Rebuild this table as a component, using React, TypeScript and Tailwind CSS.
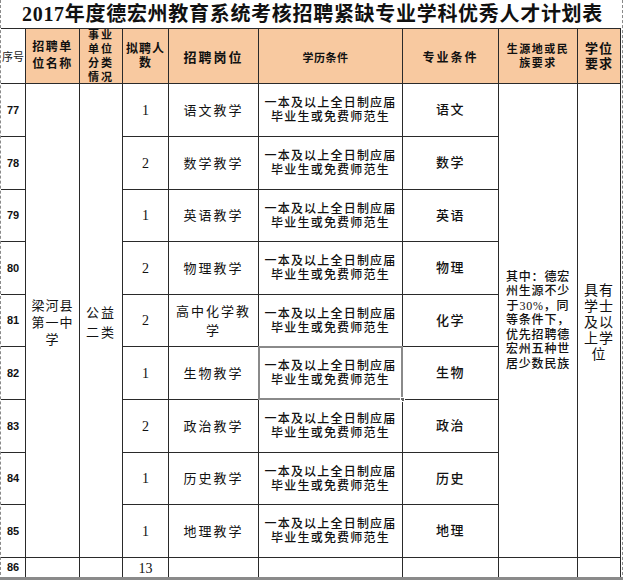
import React from "react";

type Row = { n: number; c: number; p: React.ReactNode; m: string; sel?: boolean };

const rows: Row[] = [
  { n: 77, c: 1, p: "语文教学", m: "语文" },
  { n: 78, c: 2, p: "数学教学", m: "数学" },
  { n: 79, c: 1, p: "英语教学", m: "英语" },
  { n: 80, c: 2, p: "物理教学", m: "物理" },
  { n: 81, c: 2, p: (<>高中化学教<br />学</>), m: "化学" },
  { n: 82, c: 1, p: "生物教学", m: "生物", sel: true },
  { n: 83, c: 2, p: "政治教学", m: "政治" },
  { n: 84, c: 1, p: "历史教学", m: "历史" },
  { n: 85, c: 1, p: "地理教学", m: "地理" },
];

const cell = "bg-white flex items-center justify-center text-center text-[#111]";
const head = "bg-[#f8c9a0] flex items-center justify-center text-center text-[#111] font-semibold";

export default function App() {
  return (
    <div className="relative w-[625px] h-[580px] overflow-hidden bg-white font-['Liberation_Serif','Noto_Sans_CJK_SC',serif]">
      <div className="h-[28px] flex items-center justify-center text-[20px] font-bold tracking-[0.7px] text-[#111] leading-none">
        2017年度德宏州教育系统考核招聘紧缺专业学科优秀人才计划表
      </div>
      <div className="ml-px w-[620px] bg-[#2a2a2a] pt-px pr-px">
        <div className="grid grid-cols-[24px_53px_42px_45px_89px_143px_95px_78px_42px] grid-rows-[54px_52px_52px_51px_52px_51px_52px_52px_51px_52px_19px] gap-px">
          {/* header */}
          <div className="bg-white flex items-center justify-start text-[11px] text-[#222] font-['Noto_Sans_CJK_SC',sans-serif] leading-none pl-[1px]">序号</div>
          <div className={`${head} text-[12px] leading-[17px] tracking-[1.5px]`}>招聘单<br />位名称</div>
          <div className={`${head} text-[11px] leading-[14px] tracking-[2px] overflow-hidden`}>事业<br />单位<br />分类<br />情况</div>
          <div className={`${head} text-[12px] leading-[14px] tracking-[1px]`}>拟聘人<br />数</div>
          <div className={`${head} text-[13px] tracking-[2px] pt-[4px]`}>招聘岗位</div>
          <div className={`${head} text-[11px] tracking-[0.5px] pt-[4px] pr-[10px]`}>学历条件</div>
          <div className={`${head} text-[12px] tracking-[2px] pt-[4px]`}>专业条件</div>
          <div className={`${head} text-[11px] leading-[14px] tracking-[1.5px]`}>生源地或民<br />族要求</div>
          <div className={`${head} text-[13px] leading-[15px] tracking-[1px]`}>学位<br />要求</div>

          {rows.map((r, i) => (
            <React.Fragment key={r.n}>
              <div className={`${cell} text-[11px] font-bold font-['Liberation_Sans',sans-serif]`}>{r.n}</div>
              {i === 0 && (
                <>
                  <div className={`${cell} row-span-9 text-[13px] leading-[17px] tracking-[1px] pt-[4px]`}>梁河县<br />第一中<br />学</div>
                  <div className={`${cell} row-span-9 text-[13px] leading-[20px] tracking-[2px] pt-[4px]`}>公益<br />二类</div>
                </>
              )}
              <div className={`${cell} text-[14px]`}>{r.c}</div>
              <div className={`${cell} text-[13px] leading-[19px] tracking-[2px]`}>{r.p}</div>
              <div className={`${cell} relative text-[12px] leading-[14px] tracking-[1.2px] font-medium`}>
                <span>一本及以上全日制应届<br />毕业生或免费师范生</span>
                {r.sel && (
                  <div className="absolute -inset-px border-2 border-[#8a8a8a]">
                    <div className="absolute -right-[4px] -bottom-[4px] w-[5px] h-[5px] bg-[#666] border border-white" />
                  </div>
                )}
              </div>
              <div className={`${cell} text-[13px] tracking-[1.5px] font-medium`}>{r.m}</div>
              {i === 0 && (
                <>
                  <div className={`${cell} row-span-9 text-[12px] leading-[14.5px] tracking-[0.8px] font-medium px-[4px]`}>
                    其中：德宏<br />州生源不少<br />于30%，同<br />等条件下，<br />优先招聘德<br />宏州五种世<br />居少数民族
                  </div>
                  <div className={`${cell} row-span-9 text-[14px] leading-[16px] tracking-[1px] pt-[4px]`}>
                    具有<br />学士<br />及以<br />上学<br />位
                  </div>
                </>
              )}
            </React.Fragment>
          ))}

          {/* row 86 */}
          <div className={`${cell} text-[11px] font-bold font-['Liberation_Sans',sans-serif]`}>86</div>
          <div className={cell} />
          <div className={cell} />
          <div className={`${cell} items-end text-[14px] leading-none pb-[1px]`}>13</div>
          <div className={cell} />
          <div className={cell} />
          <div className={cell} />
          <div className={cell} />
          <div className={cell} />
        </div>
      </div>
      <div className="ml-px w-[621px] h-[3px] bg-[#8a8a8a]" />

      {/* page-break dashed lines */}
      <div className="absolute left-0 top-0 h-[580px] border-l border-dashed border-[#8a8a8a]" />
      <div className="absolute left-[622px] top-0 h-[580px] border-l border-dashed border-[#8a8a8a]" />
    </div>
  );
}
